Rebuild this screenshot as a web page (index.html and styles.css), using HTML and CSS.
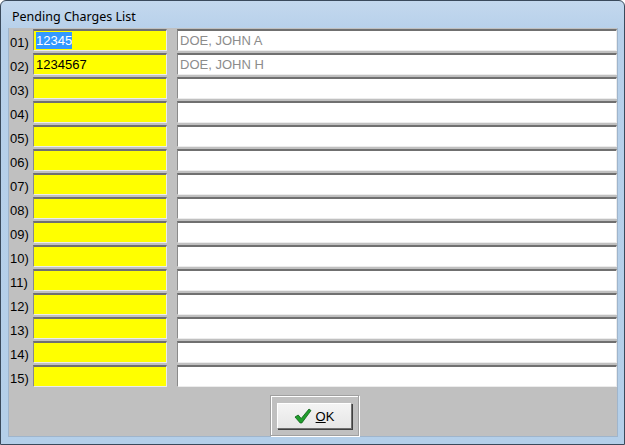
FILE: index.html
```html
<!DOCTYPE html>
<html lang="en">
<head>
  <meta charset="UTF-8">
  <title>Pending Charges List</title>
  <link rel="stylesheet" href="styles.css">
</head>
<body>

  <div class="window">
    <div class="titlebar">Pending Charges List</div>

    <div class="client">
      <!-- Charge rows -->
      <div class="rows">
        <div class="row">
          <span class="num">01)</span>
          <div class="field acct"><span class="sel">12345</span></div>
          <div class="field name">DOE, JOHN A</div>
        </div>
        <div class="row">
          <span class="num">02)</span>
          <div class="field acct">1234567</div>
          <div class="field name">DOE, JOHN H</div>
        </div>
        <div class="row"><span class="num">03)</span><div class="field acct"></div><div class="field name"></div></div>
        <div class="row"><span class="num">04)</span><div class="field acct"></div><div class="field name"></div></div>
        <div class="row"><span class="num">05)</span><div class="field acct"></div><div class="field name"></div></div>
        <div class="row"><span class="num">06)</span><div class="field acct"></div><div class="field name"></div></div>
        <div class="row"><span class="num">07)</span><div class="field acct"></div><div class="field name"></div></div>
        <div class="row"><span class="num">08)</span><div class="field acct"></div><div class="field name"></div></div>
        <div class="row"><span class="num">09)</span><div class="field acct"></div><div class="field name"></div></div>
        <div class="row"><span class="num">10)</span><div class="field acct"></div><div class="field name"></div></div>
        <div class="row"><span class="num">11)</span><div class="field acct"></div><div class="field name"></div></div>
        <div class="row"><span class="num">12)</span><div class="field acct"></div><div class="field name"></div></div>
        <div class="row"><span class="num">13)</span><div class="field acct"></div><div class="field name"></div></div>
        <div class="row"><span class="num">14)</span><div class="field acct"></div><div class="field name"></div></div>
        <div class="row"><span class="num">15)</span><div class="field acct"></div><div class="field name"></div></div>
      </div>

      <!-- OK button -->
      <div class="footer">
        <div class="btn-group">
          <button class="btn">
            <svg width="18" height="16" viewBox="0 0 18 16">
              <path d="M1 9 L4.2 7 L7.2 10.5 L15 1 L17 2.6 L7.8 15 L6.2 15 Z" fill="#1f9e2c" stroke="#0b5e15" stroke-width="0.8" stroke-linejoin="round"/>
            </svg>
            <span><u>O</u>K</span>
          </button>
        </div>
      </div>
    </div>
  </div>

</body>
</html>
```

FILE: styles.css
```css
body {
  margin: 0;
  background-color: #fff;
  font-family: "Liberation Sans", Arial, sans-serif;
  font-size: 13px;
}

.window {
  width: 623px;
  height: 443px;
  border: 1px solid #3a4a5c;
  border-radius: 6px 6px 0 0;
  background: linear-gradient(to bottom, #c3d8ee 0, #b7d0ea 30px, #b4cfe9 100%);
  display: flex;
  flex-direction: column;
}

.titlebar {
  height: 27px;
  padding-left: 11px;
  line-height: 32px;
  font-family: "Noto Sans", "DejaVu Sans", sans-serif;
  font-size: 12.5px;
  color: #000;
}

.client {
  margin: 0 6px 7px 7px;
  flex: 1;
  background-color: #c0c0c0;
  border: 1px solid #9fb5cc;
  border-top: none;
  display: flex;
  flex-direction: column;
}

.rows {
  padding-top: 1px;
  display: flex;
  flex-direction: column;
  gap: 2px;
}

.row {
  display: flex;
  height: 22px;
}

.num {
  width: 23px;
  padding-left: 1px;
  align-self: flex-end;
  line-height: 14px;
  padding-bottom: 1px;
  color: #000;
}

.field {
  box-sizing: border-box;
  height: 22px;
  border-top: 2px solid #707070;
  border-left: 1px solid #8a8a8a;
  border-bottom: 1px solid #ececec;
  border-right: 1px solid #ececec;
  padding: 1px 2px 0 2px;
  line-height: 17px;
  white-space: nowrap;
}

.acct {
  width: 134px;
  background-color: #ffff00;
  color: #000;
}

.name {
  width: 440px;
  margin-left: 10px;
  background-color: #fff;
  color: #8c8c8c;
}

.sel {
  background-color: #3399ff;
  color: #fff;
  padding: 1px 0;
}

.footer {
  flex: 1;
  display: flex;
  justify-content: center;
  padding-top: 8px;
}

.btn-group {
  width: 89px;
  height: 41px;
  margin-left: 2px;
  border: 1px solid #a0a0a0;
  box-shadow: 1px 1px 0 #fff, inset 1px 1px 0 #fff;
  display: flex;
  justify-content: center;
  padding-top: 7px;
  box-sizing: border-box;
}

.btn {
  width: 75px;
  height: 26px;
  border: 1px solid #707070;
  border-top-color: #fff;
  border-left-color: #fff;
  box-shadow: 1px 1px 0 #404040;
  background: linear-gradient(to bottom, #f4f4f4, #e6e6e6);
  font-family: "Liberation Sans", Arial, sans-serif;
  font-size: 13px;
  color: #000;
  display: flex;
  align-items: center;
  justify-content: center;
  gap: 4px;
  padding: 0;
}
```
